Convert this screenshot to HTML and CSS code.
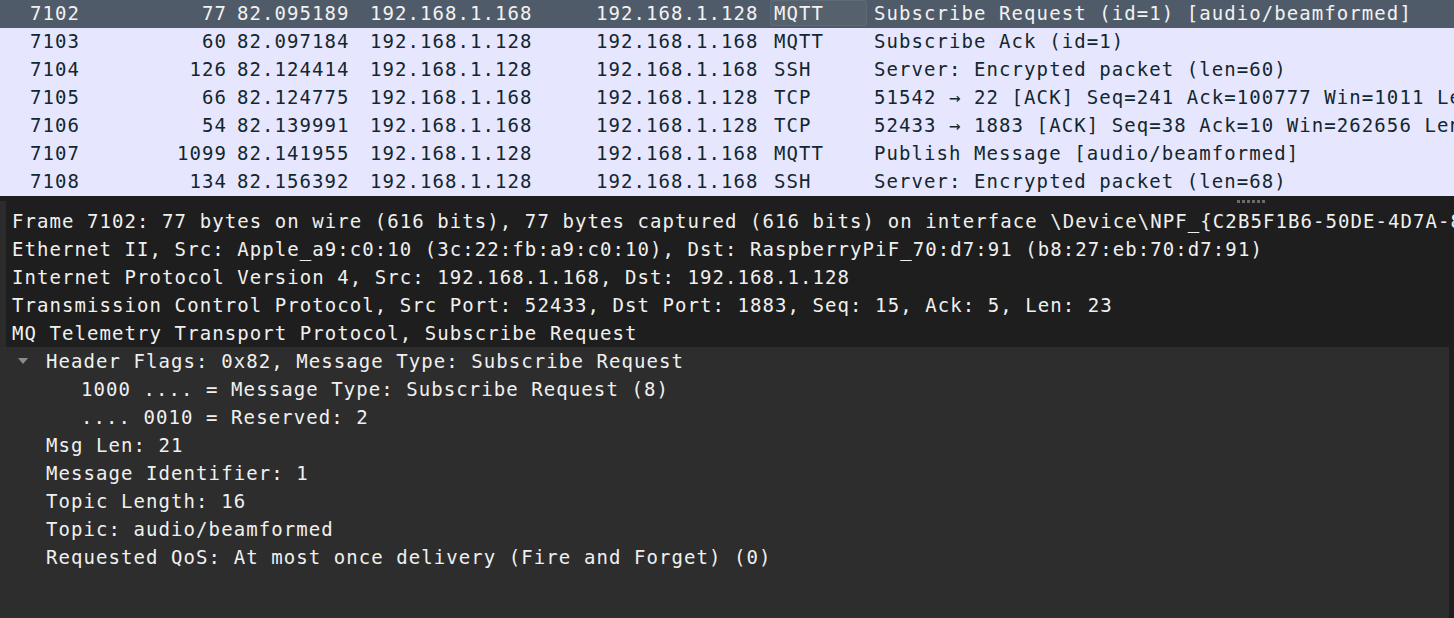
FILE: index.html
```html
<!DOCTYPE html>
<html>
<head>
<meta charset="utf-8">
<link rel="stylesheet" href="styles.css">
</head>
<body>
<div class="list">
  <div class="row sel">
    <span class="c no">7102</span><span class="c len">77</span><span class="c time">82.095189</span><span class="c src">192.168.1.168</span><span class="c dst">192.168.1.128</span><span class="c proto focus">MQTT</span><span class="c info">Subscribe Request (id=1) [audio/beamformed]</span>
  </div>
  <div class="row">
    <span class="c no">7103</span><span class="c len">60</span><span class="c time">82.097184</span><span class="c src">192.168.1.128</span><span class="c dst">192.168.1.168</span><span class="c proto">MQTT</span><span class="c info">Subscribe Ack (id=1)</span>
  </div>
  <div class="row">
    <span class="c no">7104</span><span class="c len">126</span><span class="c time">82.124414</span><span class="c src">192.168.1.128</span><span class="c dst">192.168.1.168</span><span class="c proto">SSH</span><span class="c info">Server: Encrypted packet (len=60)</span>
  </div>
  <div class="row">
    <span class="c no">7105</span><span class="c len">66</span><span class="c time">82.124775</span><span class="c src">192.168.1.168</span><span class="c dst">192.168.1.128</span><span class="c proto">TCP</span><span class="c info">51542 → 22 [ACK] Seq=241 Ack=100777 Win=1011 Len=0</span>
  </div>
  <div class="row">
    <span class="c no">7106</span><span class="c len">54</span><span class="c time">82.139991</span><span class="c src">192.168.1.168</span><span class="c dst">192.168.1.128</span><span class="c proto">TCP</span><span class="c info">52433 → 1883 [ACK] Seq=38 Ack=10 Win=262656 Len=0</span>
  </div>
  <div class="row">
    <span class="c no">7107</span><span class="c len">1099</span><span class="c time">82.141955</span><span class="c src">192.168.1.128</span><span class="c dst">192.168.1.168</span><span class="c proto">MQTT</span><span class="c info">Publish Message [audio/beamformed]</span>
  </div>
  <div class="row">
    <span class="c no">7108</span><span class="c len">134</span><span class="c time">82.156392</span><span class="c src">192.168.1.128</span><span class="c dst">192.168.1.168</span><span class="c proto">SSH</span><span class="c info">Server: Encrypted packet (len=68)</span>
  </div>
</div>
<div class="splitter">
  <div class="handle"><i></i><i></i><i></i><i></i><i></i><i></i></div>
</div>
<div class="tree">
  <div class="top">
    <div class="strip"></div>
    <div class="toprows">
      <div class="trow l0">Frame 7102: 77 bytes on wire (616 bits), 77 bytes captured (616 bits) on interface \Device\NPF_{C2B5F1B6-50DE-4D7A-8F3C-1A2B3C4D5E6F}, id 0</div>
      <div class="trow l0">Ethernet II, Src: Apple_a9:c0:10 (3c:22:fb:a9:c0:10), Dst: RaspberryPiF_70:d7:91 (b8:27:eb:70:d7:91)</div>
      <div class="trow l0">Internet Protocol Version 4, Src: 192.168.1.168, Dst: 192.168.1.128</div>
      <div class="trow l0">Transmission Control Protocol, Src Port: 52433, Dst Port: 1883, Seq: 15, Ack: 5, Len: 23</div>
      <div class="trow l0">MQ Telemetry Transport Protocol, Subscribe Request</div>
    </div>
  </div>
  <div class="sub">
    <div class="trow l1 open"><span class="arrow"></span>Header Flags: 0x82, Message Type: Subscribe Request</div>
    <div class="trow l2">1000 .... = Message Type: Subscribe Request (8)</div>
    <div class="trow l2">.... 0010 = Reserved: 2</div>
    <div class="trow l1">Msg Len: 21</div>
    <div class="trow l1">Message Identifier: 1</div>
    <div class="trow l1">Topic Length: 16</div>
    <div class="trow l1">Topic: audio/beamformed</div>
    <div class="trow l1">Requested QoS: At most once delivery (Fire and Forget) (0)</div>
  </div>
</div>
</body>
</html>
```
FILE: styles.css
```css
html, body {
  margin: 0;
  padding: 0;
  height: 100%;
}
body {
  background: #1e1e1e;
  font-family: "DejaVu Sans Mono", "Liberation Mono", monospace;
  font-size: 19px;
  letter-spacing: 1.07px;
  overflow: hidden;
  display: flex;
  flex-direction: column;
  width: 1454px;
  height: 618px;
}
.list {
  background: #e7e6ff;
  color: #12272e;
}
.row {
  display: grid;
  grid-template-columns: 170px 62px 134px 226px 178px 97px 1fr;
  height: 28px;
  line-height: 27px;
  white-space: nowrap;
}
.row.sel {
  background: #505b6a;
  color: #f2f2f2;
}
.c {
  overflow: hidden;
  box-sizing: border-box;
}
.no { padding-left: 30px; }
.len { text-align: right; padding-right: 5px; }
.time { padding-left: 5px; }
.src { padding-left: 4px; }
.dst { padding-left: 4px; }
.proto { padding-left: 4px; }
.info { padding-left: 7px; }
.focus {
  background: #56616e;
  border: 1px solid #5f6a77;
  border-radius: 2px;
  height: 26px;
  line-height: 24px;
  padding-left: 3px;
}
.splitter {
  height: 5px;
  position: relative;
  background: #1e1e1e;
}
.handle {
  position: absolute;
  left: 1237px;
  top: 4px;
  display: flex;
  gap: 2px;
  z-index: 2;
}
.handle i {
  display: block;
  width: 3px;
  height: 3px;
  background: #6b6b6b;
}
.tree {
  flex: 1;
  display: flex;
  flex-direction: column;
  color: #f0f0f0;
  background: #1e1e1e;
}
.top {
  display: flex;
}
.strip {
  width: 6px;
  flex: none;
  background: #2b2b2b;
}
.toprows {
  flex: 1;
  padding-top: 6px;
  background: #1e1e1e;
  overflow: hidden;
}
.trow {
  height: 28px;
  line-height: 28px;
  white-space: nowrap;
  overflow: hidden;
  position: relative;
}
.l0 { padding-left: 6px; }
.sub {
  flex: 1;
  background: #2d2d2d;
  margin-right: 5px;
}
.l1 { padding-left: 46px; }
.l2 { padding-left: 81px; }
.arrow {
  position: absolute;
  left: 18px;
  top: 11px;
  width: 0;
  height: 0;
  border-left: 5px solid transparent;
  border-right: 5px solid transparent;
  border-top: 6px solid #8c8c8c;
}
```
